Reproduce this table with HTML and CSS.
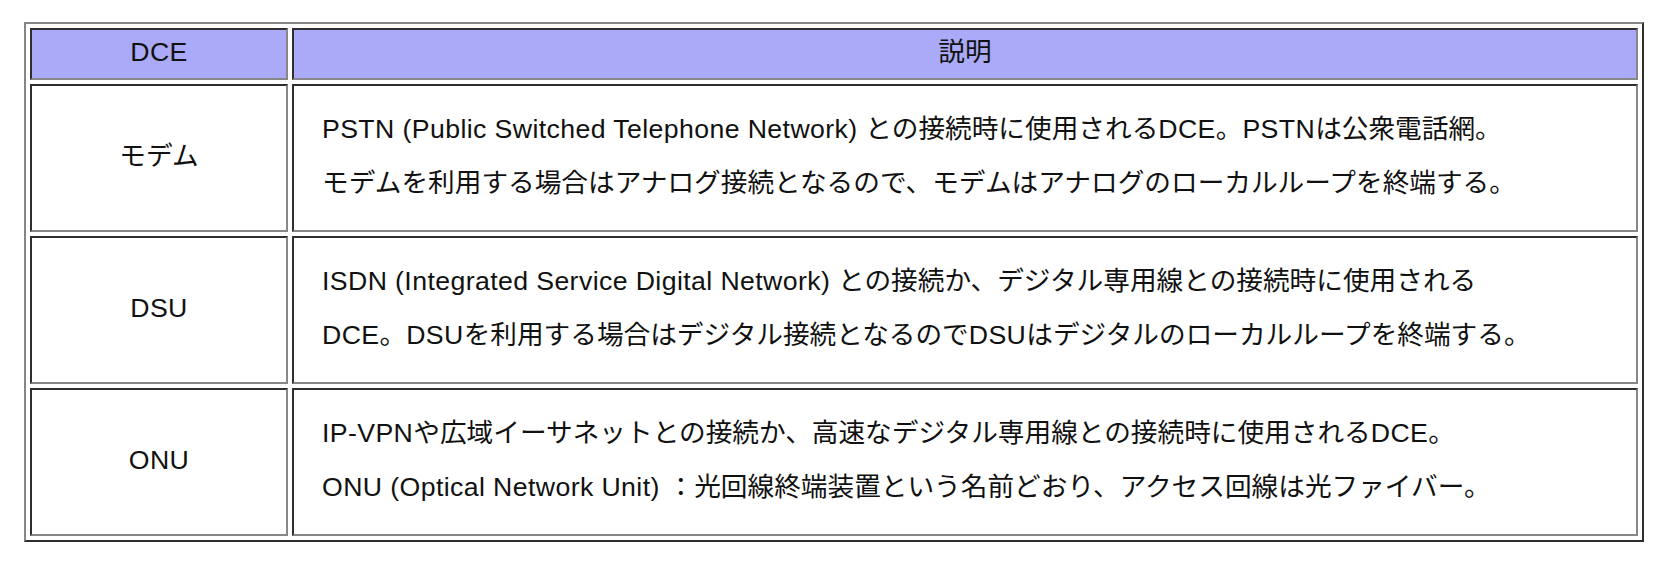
FILE: index.html
```html
<!DOCTYPE html>
<html lang="ja">
<head>
<meta charset="utf-8">
<title>DCE</title>
<link rel="stylesheet" href="styles.css">
</head>
<body>
<table class="dce-table">
  <thead>
    <tr>
      <th class="col-name"><span class="en">DCE</span></th>
      <th class="col-desc">説明</th>
    </tr>
  </thead>
  <tbody>
    <tr>
      <td class="name">モデム</td>
      <td class="desc">
        <div class="line"><span class="en">PSTN (Public Switched Telephone Network) </span>との接続時に使用される<span class="en">DCE</span>。<span class="en">PSTN</span>は公衆電話網。</div>
        <div class="line">モデムを利用する場合はアナログ接続となるので、モデムはアナログのローカルループを終端する。</div>
      </td>
    </tr>
    <tr>
      <td class="name"><span class="en">DSU</span></td>
      <td class="desc">
        <div class="line"><span class="en">ISDN (Integrated Service Digital Network) </span>との接続か、デジタル専用線との接続時に使用される</div>
        <div class="line"><span class="en">DCE</span>。<span class="en">DSU</span>を利用する場合はデジタル接続となるので<span class="en">DSU</span>はデジタルのローカルループを終端する。</div>
      </td>
    </tr>
    <tr>
      <td class="name"><span class="en">ONU</span></td>
      <td class="desc">
        <div class="line"><span class="en">IP-VPN</span>や広域イーサネットとの接続か、高速なデジタル専用線との接続時に使用される<span class="en">DCE</span>。</div>
        <div class="line"><span class="en">ONU (Optical Network Unit) </span>：光回線終端装置という名前どおり、アクセス回線は光ファイバー。</div>
      </td>
    </tr>
  </tbody>
</table>
</body>
</html>
```

FILE: styles.css
```css
html, body {
  margin: 0;
  padding: 0;
  background: #ffffff;
}

body {
  padding: 22px 24px;
  font-family: "Liberation Sans", "Noto Sans CJK JP", sans-serif;
  font-size: 26.67px;
  color: #111111;
}

.en {
  letter-spacing: 0.4px;
}

.dce-table {
  width: 1620px;
  border-collapse: separate;
  border-spacing: 4px;
  border: 2px solid;
  border-color: #878787 #2e2e2e #2e2e2e #878787;
  table-layout: fixed;
}

.dce-table th,
.dce-table td {
  box-sizing: border-box;
  border: 2px solid;
  border-color: #2e2e2e #878787 #878787 #2e2e2e;
  padding: 0;
}

.dce-table th {
  background: #aaaaf8;
  font-weight: normal;
  text-align: center;
  height: 52px;
  line-height: 44px;
  padding-bottom: 4px;
}

.col-name {
  width: 258px;
}

.col-desc {
  width: 1346px;
}

.dce-table td {
  height: 148px;
  vertical-align: middle;
  padding-bottom: 4px;
  line-height: 54px;
}

.name {
  text-align: center;
}

.desc {
  padding-left: 28px !important;
  text-align: left;
}

.line {
  line-height: 54px;
  white-space: nowrap;
}
```
